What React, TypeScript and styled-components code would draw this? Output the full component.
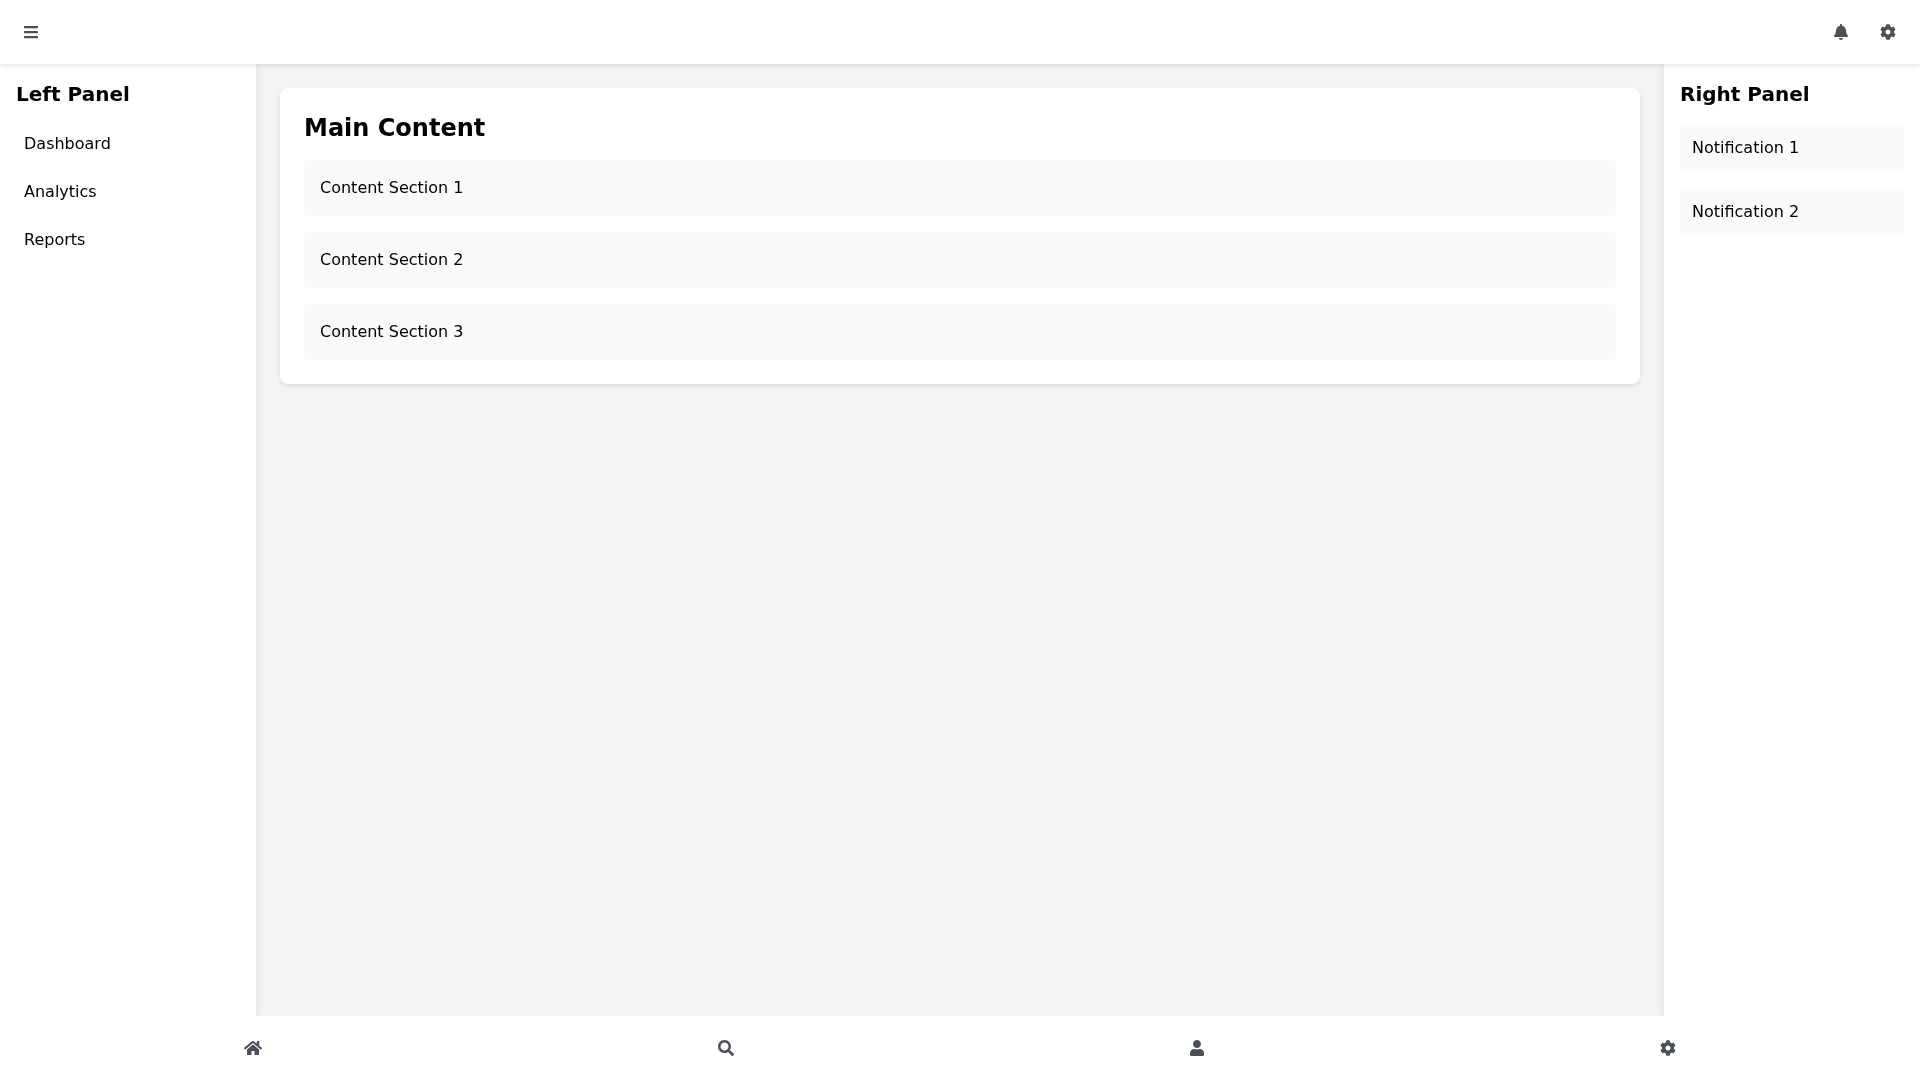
import * as React from 'react';
import styled, { createGlobalStyle } from 'styled-components';
import { FaBars, FaBell, FaCog, FaHome, FaSearch, FaUser } from 'react-icons/fa';

const GlobalStyle = createGlobalStyle`
  html, body {
    margin: 0;
    padding: 0;
    height: 100%;
  }

  body {
    font-family: "DejaVu Sans", sans-serif;
    font-size: 16px;
    line-height: 24px;
    color: #000;
  }

  * {
    box-sizing: border-box;
  }
`;

const Shell = styled.div`
  width: 100%;
  height: 100vh;
  display: flex;
  flex-direction: column;
  overflow: hidden;
  background: #f3f4f6;
  will-change: transform;
`;

const Header = styled.header`
  position: relative;
  z-index: 10;
  flex: 0 0 64px;
  display: flex;
  align-items: center;
  justify-content: space-between;
  padding: 0 16px;
  background: #fff;
  box-shadow: 0 2px 4px rgba(0, 0, 0, 0.1);
`;

const IconButton = styled.button<{ $iconWidth?: number }>`
  padding: 8px;
  display: flex;
  align-items: center;
  justify-content: center;
  border: none;
  border-radius: 4px;
  background: transparent;
  color: #4b4f57;
  cursor: pointer;

  svg {
    display: block;
    flex: none;
    width: ${({ $iconWidth = 16 }) => $iconWidth}px;
    height: 16px;
  }
`;

const HeaderActions = styled.div`
  display: flex;
  gap: 16px;
`;

const Body = styled.div`
  flex: 1;
  min-height: 0;
  display: flex;
`;

const Panel = styled.aside`
  position: relative;
  flex: 0 0 256px;
  padding: 16px;
  background: #fff;
  box-shadow: 0 0 10px rgba(0, 0, 0, 0.1);
`;

const PanelTitle = styled.h2`
  margin: 0 0 16px;
  font-size: 20px;
  line-height: 28px;
  font-weight: 700;
`;

const NavList = styled.nav`
  display: flex;
  flex-direction: column;
  gap: 8px;
`;

const NavItem = styled.a`
  display: block;
  padding: 8px;
  border-radius: 4px;
  color: #000;
  cursor: pointer;
`;

const Notification = styled.div`
  padding: 12px;
  margin-bottom: 16px;
  border-radius: 4px;
  background: #f9fafb;
`;

const Main = styled.main`
  flex: 1;
  min-width: 0;
  padding: 24px;
`;

const Card = styled.section`
  padding: 24px;
  border-radius: 8px;
  background: #fff;
  box-shadow: 0 2px 4px rgba(0, 0, 0, 0.1);
`;

const CardTitle = styled.h1`
  margin: 0 0 16px;
  font-size: 24px;
  line-height: 32px;
  font-weight: 700;
`;

const Sections = styled.div`
  display: flex;
  flex-direction: column;
  gap: 16px;
`;

const Section = styled.div`
  padding: 16px;
  border-radius: 4px;
  background: #f9fafb;
`;

const BottomNav = styled.footer`
  position: relative;
  z-index: 10;
  flex: 0 0 64px;
  display: flex;
  align-items: center;
  justify-content: space-around;
  padding: 0 16px;
  background: #fff;
`;

const navItems = ['Dashboard', 'Analytics', 'Reports'];
const notifications = ['Notification 1', 'Notification 2'];
const sections = ['Content Section 1', 'Content Section 2', 'Content Section 3'];

export default function App() {
  return (
    <>
      <GlobalStyle />
      <Shell>
        <Header>
          <IconButton $iconWidth={14} aria-label="Menu"><FaBars /></IconButton>
          <HeaderActions>
            <IconButton $iconWidth={14} aria-label="Notifications"><FaBell /></IconButton>
            <IconButton aria-label="Settings"><FaCog /></IconButton>
          </HeaderActions>
        </Header>
        <Body>
          <Panel>
            <PanelTitle>Left Panel</PanelTitle>
            <NavList>
              {navItems.map((item) => (
                <NavItem key={item}>{item}</NavItem>
              ))}
            </NavList>
          </Panel>
          <Main>
            <Card>
              <CardTitle>Main Content</CardTitle>
              <Sections>
                {sections.map((section) => (
                  <Section key={section}>{section}</Section>
                ))}
              </Sections>
            </Card>
          </Main>
          <Panel>
            <PanelTitle>Right Panel</PanelTitle>
            {notifications.map((note) => (
              <Notification key={note}>{note}</Notification>
            ))}
          </Panel>
        </Body>
        <BottomNav>
          <IconButton $iconWidth={18} aria-label="Home"><FaHome /></IconButton>
          <IconButton aria-label="Search"><FaSearch /></IconButton>
          <IconButton $iconWidth={14} aria-label="Profile"><FaUser /></IconButton>
          <IconButton aria-label="Settings"><FaCog /></IconButton>
        </BottomNav>
      </Shell>
    </>
  );
}
